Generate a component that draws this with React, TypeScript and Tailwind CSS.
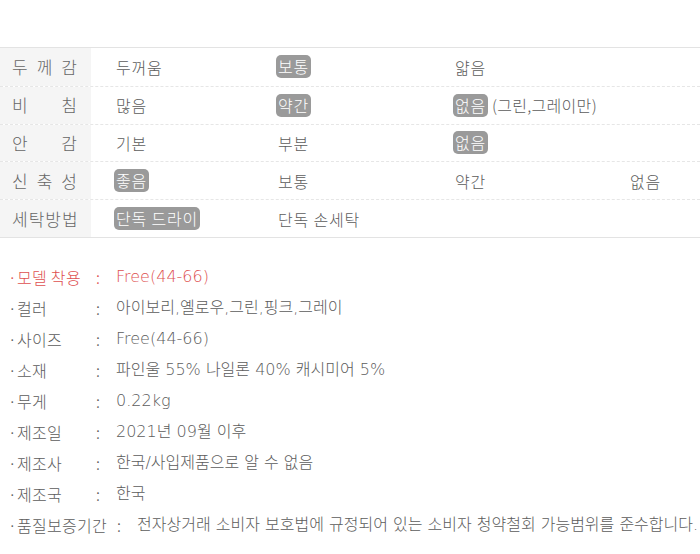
import React from 'react';

type Cell = { text: string; on?: boolean; extra?: string };

const rows: { label: string; spaced?: boolean; cells: Cell[] }[] = [
  { label: '두께감', spaced: true, cells: [{ text: '두꺼움' }, { text: '보통', on: true }, { text: '얇음' }, { text: '' }] },
  { label: '비침', spaced: true, cells: [{ text: '많음' }, { text: '약간', on: true }, { text: '없음', on: true, extra: ' (그린,그레이만)' }, { text: '' }] },
  { label: '안감', spaced: true, cells: [{ text: '기본' }, { text: '부분' }, { text: '없음', on: true }, { text: '' }] },
  { label: '신축성', spaced: true, cells: [{ text: '좋음', on: true }, { text: '보통' }, { text: '약간' }, { text: '없음' }] },
  { label: '세탁방법', cells: [{ text: '단독 드라이', on: true }, { text: '단독 손세탁' }, { text: '' }, { text: '' }] },
];

const specs = [
  { k: '모델 착용', v: 'Free(44-66)', red: true },
  { k: '컬러', v: '아이보리,옐로우,그린,핑크,그레이' },
  { k: '사이즈', v: 'Free(44-66)' },
  { k: '소재', v: '파인울 55% 나일론 40% 캐시미어 5%' },
  { k: '무게', v: '0.22kg' },
  { k: '제조일', v: '2021년 09월 이후' },
  { k: '제조사', v: '한국/사입제품으로 알 수 없음' },
  { k: '제조국', v: '한국' },
  { k: '품질보증기간', v: '전자상거래 소비자 보호법에 규정되어 있는 소비자 청약철회 가능범위를 준수합니다.' },
];

export default function App() {
  return (
    <div className="w-[700px] h-[554px] bg-white overflow-hidden text-[#5c5c5c] font-light font-['Noto_Sans_CJK_KR','Noto_Sans',sans-serif]">
      {/* 소재 정보 표 */}
      <div className="mt-[47px] border-t border-b border-[#e3e3e3]">
        {rows.map((r, i) => (
          <div
            key={r.label}
            className={`grid grid-cols-[91px_162px_177px_175px_1fr] h-[37.8px] items-stretch ${i > 0 ? 'border-t border-dashed border-[#e6e6e6]' : ''}`}
          >
            <div className="bg-[#f5f5f5] flex items-center px-[12px] text-[17px] text-[#666]">
              {r.spaced ? (
                <span className="flex w-full justify-between pr-[2px]">
                  {r.label.split('').map((c, j) => (
                    <span key={j}>{c}</span>
                  ))}
                </span>
              ) : (
                <span className="tracking-[1px]">{r.label}</span>
              )}
            </div>
            {r.cells.map((c, j) => (
              <div key={j} className="flex items-center pl-[25px] text-[16px] tracking-[0.8px] whitespace-nowrap">
                {c.on ? (
                  <span className="inline-block -ml-[2px] px-[2px] rounded-[5px] bg-[#9a9a9a] text-white leading-[23px]">{c.text}</span>
                ) : (
                  <span>{c.text}</span>
                )}
                {c.extra && <span className="whitespace-pre tracking-[0.3px]">{c.extra}</span>}
              </div>
            ))}
          </div>
        ))}
      </div>

      {/* 상품 정보 */}
      <div className="mt-[24px] flex flex-col text-[16px]">
        {specs.map((s) => (
          <div key={s.k} className={`flex h-[31px] items-center whitespace-nowrap ${s.red ? 'text-[#de5050]' : ''}`}>
            <span className="pl-[8px] min-w-[86px] shrink-0 tracking-[0.3px]">·{s.k}</span>
            <span className="pl-[10px] w-[30px] shrink-0">:</span>
            <span className="font-['DejaVu_Sans','Noto_Sans_CJK_KR',sans-serif] font-extralight">{s.v}</span>
          </div>
        ))}
      </div>
    </div>
  );
}
